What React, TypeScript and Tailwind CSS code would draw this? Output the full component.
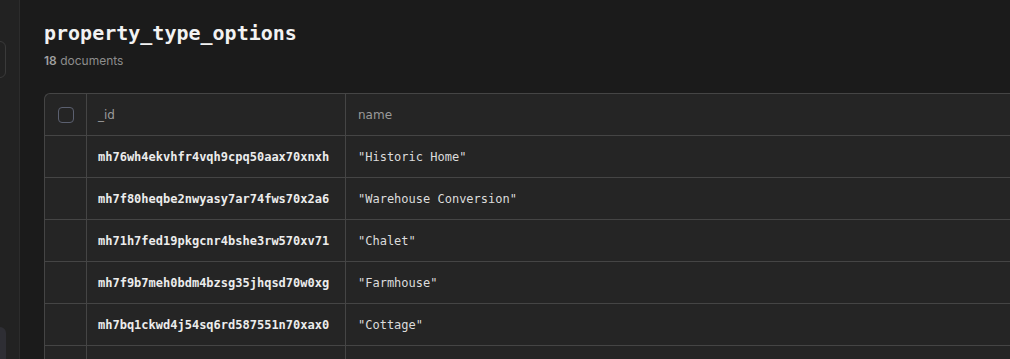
const rows = [
  { id: "mh76wh4ekvhfr4vqh9cpq50aax70xnxh", name: '"Historic Home"' },
  { id: "mh7f80heqbe2nwyasy7ar74fws70x2a6", name: '"Warehouse Conversion"' },
  { id: "mh71h7fed19pkgcnr4bshe3rw570xv71", name: '"Chalet"' },
  { id: "mh7f9b7meh0bdm4bzsg35jhqsd70w0xg", name: '"Farmhouse"' },
  { id: "mh7bq1ckwd4j54sq6rd587551n70xax0", name: '"Cottage"' },
];

const mono = "font-['DejaVu_Sans_Mono','Liberation_Mono',monospace]";

export default function App() {
  return (
    <div className="flex h-screen w-full overflow-hidden bg-[#1b1b1b] font-['Inter','Noto_Sans',sans-serif]">
      {/* collapsed sidebar */}
      <aside className="flex w-[20px] shrink-0 flex-col justify-between overflow-hidden border-r border-[#2c2c2c] bg-[#222222]">
        <div className="-ml-[34px] mt-[41px] h-[37px] w-[40px] rounded-md border border-[#3a3a3a]" />
        <div className="-ml-[34px] h-[32px] w-[40px] rounded-t-md bg-[#2e2e34]" />
      </aside>

      <main className="min-w-0 flex-1 overflow-hidden pl-[24px] pt-[19px]">
        <h1 className={`${mono} text-[20px] leading-[28px] font-bold text-[#f2f2f2]`}>
          property_type_options
        </h1>
        <p className="mt-[6px] text-[12px] leading-[16px] text-[#8d8d8d]">
          <span className="font-semibold text-[#a0a0a0]">18</span> documents
        </p>

        <div className="mt-[24px] w-[1200px] rounded-tl-md border-l border-t border-[#454545] bg-[#252525]">
          <div className="grid h-[42px] grid-cols-[42px_259px_1fr] border-b border-[#454545]">
            <div className="flex items-center justify-center border-r border-[#454545]">
              <span className="ml-[1px] h-[16px] w-[16px] rounded-[4px] border border-[#5b6070]" />
            </div>
            <div className="flex items-center border-r border-[#454545] pl-[11px] font-['DejaVu_Sans',sans-serif] text-[12px] text-[#9a9a9a]">
              _id
            </div>
            <div className="flex items-center pl-[12px] font-['DejaVu_Sans',sans-serif] text-[12px] text-[#9a9a9a]">
              name
            </div>
          </div>
          {rows.map((r) => (
            <div key={r.id} className="grid h-[42px] grid-cols-[42px_259px_1fr] border-b border-[#454545]">
              <div className="border-r border-[#454545]" />
              <div className={`${mono} flex items-center border-r border-[#454545] pl-[11px] text-[12px] font-bold text-[#ececec]`}>
                {r.id}
              </div>
              <div className={`${mono} flex items-center pl-[12px] text-[12px] text-[#dcdcdc]`}>
                {r.name}
              </div>
            </div>
          ))}
          {/* next row, scrolled below the fold */}
          <div className="grid h-[42px] grid-cols-[42px_259px_1fr]">
            <div className="border-r border-[#454545]" />
            <div className="border-r border-[#454545]" />
            <div />
          </div>
        </div>
      </main>
    </div>
  );
}
